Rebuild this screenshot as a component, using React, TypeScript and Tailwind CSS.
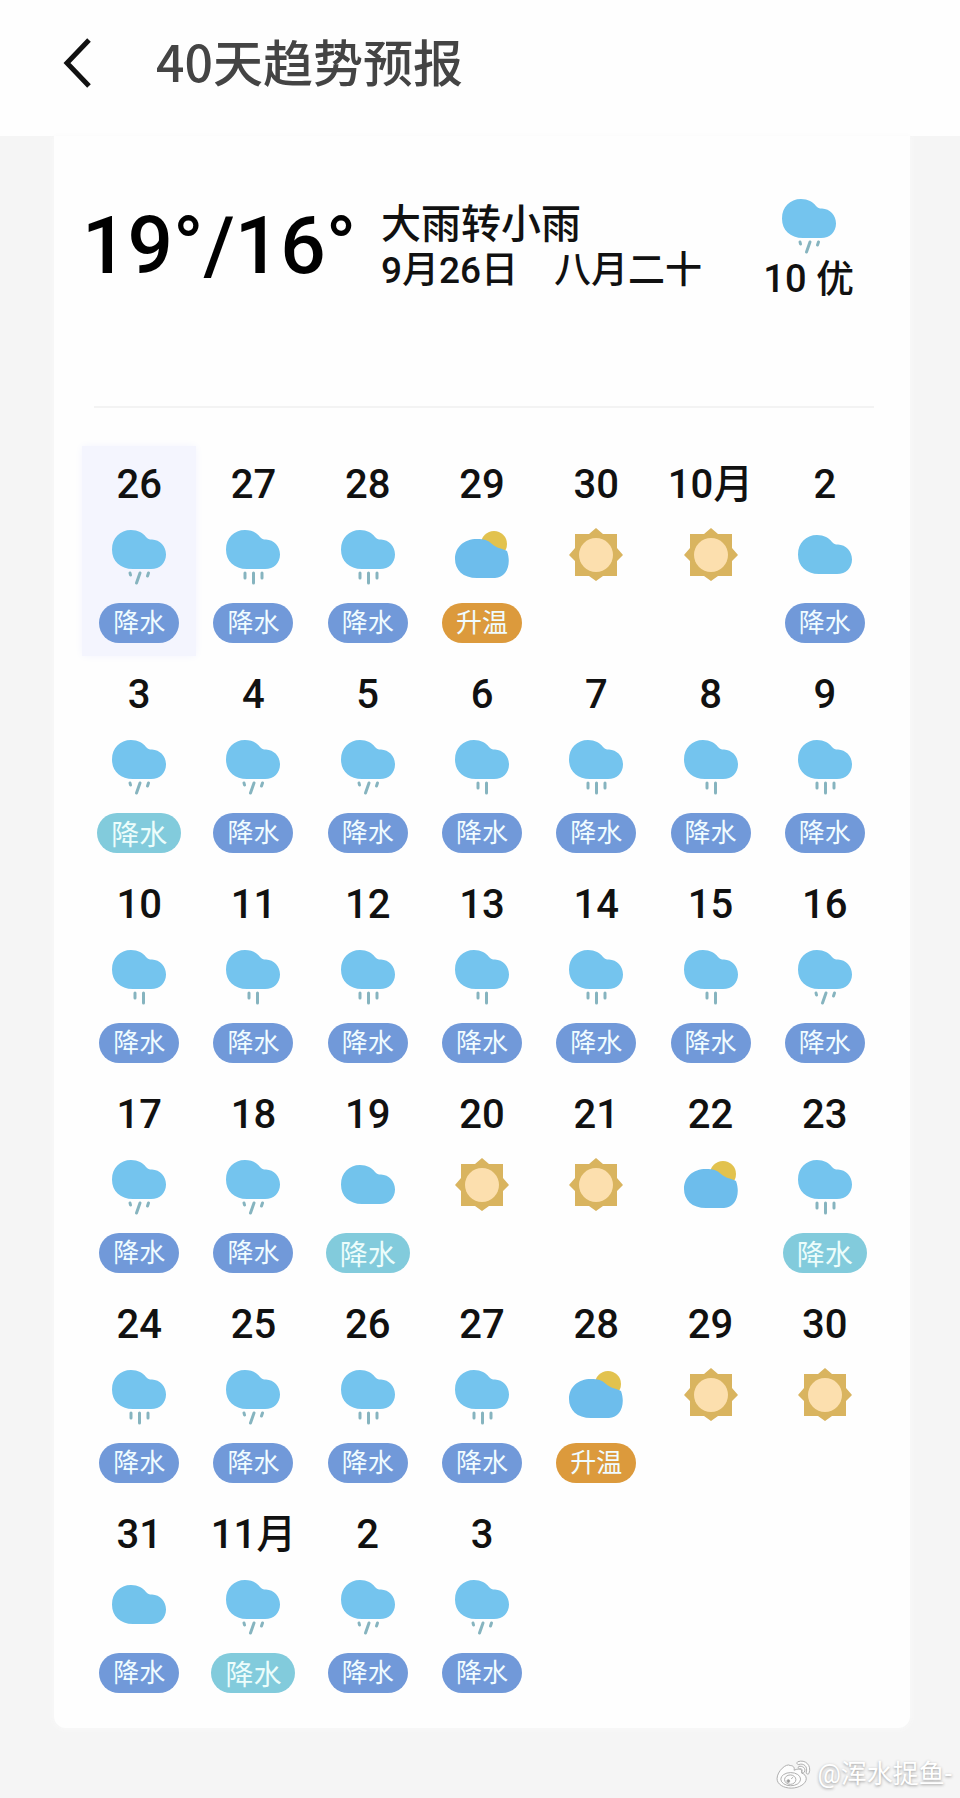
import React from "react";

type Kind = "slant" | "rain3" | "rain2" | "cloud" | "partly" | "sun";
type Tag = "降水" | "升温" | "soft" | "";
type Day = [string, Kind, Tag];

const days: Day[] = [
  ["26", "slant", "降水"], ["27", "rain3", "降水"], ["28", "rain3", "降水"], ["29", "partly", "升温"],
  ["30", "sun", ""], ["10月", "sun", ""], ["2", "cloud", "降水"],
  ["3", "slant", "soft"], ["4", "slant", "降水"], ["5", "slant", "降水"], ["6", "rain2", "降水"],
  ["7", "rain3", "降水"], ["8", "rain2", "降水"], ["9", "rain3", "降水"],
  ["10", "rain2", "降水"], ["11", "rain2", "降水"], ["12", "rain3", "降水"], ["13", "rain2", "降水"],
  ["14", "rain3", "降水"], ["15", "rain2", "降水"], ["16", "slant", "降水"],
  ["17", "slant", "降水"], ["18", "slant", "降水"], ["19", "cloud", "soft"], ["20", "sun", ""],
  ["21", "sun", ""], ["22", "partly", ""], ["23", "rain3", "soft"],
  ["24", "rain3", "降水"], ["25", "slant", "降水"], ["26", "rain3", "降水"], ["27", "rain3", "降水"],
  ["28", "partly", "升温"], ["29", "sun", ""], ["30", "sun", ""],
  ["31", "cloud", "降水"], ["11月", "slant", "soft"], ["2", "slant", "降水"], ["3", "slant", "降水"],
];

const CLOUD =
  "M21 2C28 2 33 5 36 9C38 11 39 11.500 42 11.500C50 12 56 18 56 26.500C56 35 50 41 41 41H23C10 41 2 33 2 21.500C2 10 10 2 21 2Z";

function WeatherIcon({ kind }: { kind: Kind }) {
  return (
    <svg viewBox="0 0 58 58" className="block h-[58px] w-[58px]" aria-hidden="true">
      {kind === "sun" && (
        <>
          <path
            d="M29 1L36 7H50V21L56 28L50 34V49H36L29 54L22 49H8V34L2 28L8 21V7H22Z"
            fill="#d9b45f"
          />
          <circle cx="29" cy="28" r="17" fill="#fcdfae" />
        </>
      )}
      {kind === "partly" && (
        <>
          <circle cx="41" cy="17" r="13" fill="#e2c24e" />
          <path
            d="M24 12C31 12 35 13 39 17C43 21 48 21 54 24C59 38 53 51 42 51H24C10 51 2 43 2 32C2 20 11 12 24 12Z"
            fill="#6dbdec"
          />
        </>
      )}
      {kind === "cloud" && <path d={CLOUD} transform="translate(0 6)" fill="#72c3ec" />}
      {(kind === "slant" || kind === "rain3" || kind === "rain2") && (
        <path d={CLOUD} transform="translate(0 1)" fill="#74c4ee" />
      )}
      <g stroke="#86b4bf" strokeWidth="3" strokeLinecap="round" fill="none">
        {kind === "slant" && <path d="M20 46L20.500 48M30 46L26.500 56M38.500 46L37.500 49" />}
        {kind === "rain3" && <path d="M21 46V51M29.500 46V56M38 46V51" />}
        {kind === "rain2" && <path d="M25 46V51M33.500 46V56" />}
      </g>
    </svg>
  );
}

function Pill({ tag }: { tag: Tag }) {
  if (tag === "soft")
    return (
      <span className="flex h-10 w-[84px] items-end justify-center rounded-full bg-[#82cbdc] text-[28px] leading-[34px] text-[#ecfdfb]">
        降水
      </span>
    );
  return (
    <span
      className={`flex h-10 w-20 items-center justify-center rounded-full text-[26px] leading-10 text-[#f0fcff] ${tag === "升温" ? "bg-[#dc9a3c]" : "bg-[#7199d9]"}`}
    >
      {tag}
    </span>
  );
}

function WeiboLogo() {
  return (
    <svg viewBox="0 0 40 34" className="h-[32px] w-[38px]" fill="#fdfdfd" stroke="#aaa" strokeWidth="1" aria-hidden="true">
      <path d="M16 8C12 5 2 14 2 22C2 28 9 32 17 32C26 32 33 27 33 22C33 19 31 17 28 16C29 13 27 10 20 13C21 10 19 8 16 8Z" />
      <ellipse cx="16.500" cy="22.500" rx="10.500" ry="7" />
      <ellipse cx="16" cy="23" rx="6" ry="5" />
      <circle cx="14" cy="24.500" r="1.500" fill="#999" />
      <path d="M17 22L19 20.500" />
      <path d="M24 4C32 1 39 8 36 16C35.500 18 32.500 17 33 15C35 9 30 5 25 7C23 7 22.500 5 24 4Z" />
      <path d="M25 9C29 8 33 11 31 15C30 16.500 28 15 28.500 14C29 12 28 11 26 11.500C24.500 11.500 24 9.500 25 9Z" />
    </svg>
  );
}

export default function App() {
  return (
    <div className="bg-[#f5f5f5] font-['Roboto','Noto_Sans_CJK_SC',sans-serif] text-[#111]">
      <header className="flex h-[136px] items-start bg-[#fefefe] px-[60px] pt-8">
        <button type="button" aria-label="返回" className="flex h-[60px] w-9 items-center justify-center">
          <svg viewBox="0 0 36 56" className="h-14 w-9" aria-hidden="true">
            <path d="M29 6L7 29L29 52" fill="none" stroke="#111" strokeWidth="5" />
          </svg>
        </button>
        <h1 className="ml-[60px] font-['Noto_Sans_CJK_SC',sans-serif] text-[50px] font-medium leading-[56px] text-[#444]">
          40天趋势预报
        </h1>
      </header>

      <main className="mr-[50px] ml-[54px] rounded-b-xl bg-[#fefefe] px-7 pb-[22px] shadow-[0_0_6px_#fafafa]">
        <section className="flex h-[270px] items-start pt-[60px]">
          <p className="w-[299px] text-[80px] font-medium leading-[100px] text-black">19°/16°</p>
          <div className="pt-[6px] font-medium leading-[46px]">
            <p className="text-[40px]">大雨转小雨</p>
            <p className="text-[37px]">
              9月26日<span className="ml-9">八月二十</span>
            </p>
          </div>
          <div className="ml-auto mr-7 flex flex-col items-center">
            <WeatherIcon kind="slant" />
            <p className="text-[38px] font-medium leading-[50px]">10 优</p>
          </div>
        </section>
        <hr className="mr-2 ml-3 border-t-2 border-[#f3f3f3]" />
        <ul className="mt-[38px] grid grid-cols-7">
          {days.map(([label, kind, tag], i) => (
            <li
              key={i}
              className={`flex h-[210px] flex-col items-center pt-[15px] ${i === 0 ? "bg-[#f4f5fe] shadow-[0_0_8px_#f4f5fe]" : ""}`}
            >
              <span className="text-[40px] font-medium leading-[48px]">{label}</span>
              <div className="my-[18px]">
                <WeatherIcon kind={kind} />
              </div>
              {tag && <Pill tag={tag} />}
            </li>
          ))}
        </ul>
      </main>
      <footer className="flex h-[72px] items-center justify-end gap-1 pt-5 pr-2 text-[26px] text-white [text-shadow:0_1px_3px_#999]">
        <WeiboLogo />
        <span>@浑水捉鱼-</span>
      </footer>
    </div>
  );
}
